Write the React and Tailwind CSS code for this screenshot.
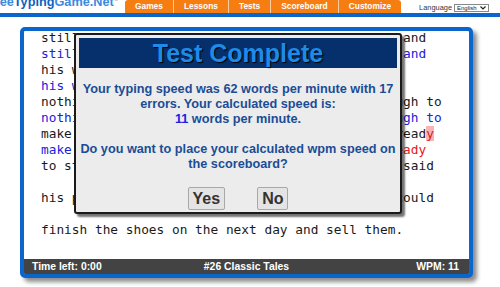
import React from "react";

const tabs = ["Games", "Lessons", "Tests", "Scoreboard", "Customize"];

const lines = [
  [{ t: "still had enough leather for one pair of shoes and" }],
  [{ t: "still had enough leather for one pair of shoes and", c: "typed" }],
  [{ t: "his wife. Now they were so poor that they had" }],
  [{ t: "his wife. Now they were so poor that they had", c: "typed" }],
  [{ t: "nothing left but a small piece of leather, enough to" }],
  [{ t: "nothing left but a small piece of leather, enough to", c: "typed" }],
  [{ t: "make one pair of shoes. In the evening he got read" }, { t: "y", c: "mark" }],
  [{ t: "make one pair of shoes. In the evening he got ", c: "typed" }, { t: "eady", c: "wrong" }],
  [{ t: "to start work early the next morning, and then said" }],
  [],
  [{ t: "his prayers, went to sleep, and hoped that he could" }],
  [],
  [{ t: "finish the shoes on the next day and sell them." }]
];

const segClass = {
  typed: "text-[#2020dd]",
  wrong: "text-[#e81818]",
  mark: "text-[#d81c1c] bg-[#f6b4b4]"
};

const Header = () => (
  <div className="flex h-[13px] items-start">
    <div className="w-[125px] shrink-0 overflow-hidden">
      <div className="ml-[-13px] mt-[-4px] whitespace-nowrap text-[12.7px] font-bold leading-[13px] text-[#3b8ae0]">
        Free<span className="text-[#0f5fc2]">Typing</span>Game.Net
        <span className="ml-[1px] text-[8px] align-top text-[#9ab]">˜</span>
      </div>
    </div>
    <div className="flex h-[13px]">
      {tabs.map((tab, i) => (
        <div
          key={tab}
          className={
            "flex h-[13px] items-center bg-[#f67d12] px-[10px] text-[8.4px] font-bold text-white " +
            (i === 0 ? "rounded-tl-[3px]" : "border-l border-[#fbcfa2]") +
            (i === tabs.length - 1 ? " rounded-tr-[3px]" : "")
          }>
          {tab}
        </div>
      ))}
    </div>
    <div className="ml-auto mr-[11px] mt-[4px] flex items-center gap-[2px]">
      <span className="text-[7.4px] leading-[8px] text-[#333]">Language</span>
      <div className="flex h-[8px] w-[35px] items-center justify-between border border-[#888] bg-white px-[2px] text-[6px] leading-[6px] text-[#222]">
        <span>English</span>
        <svg width="6" height="4" viewBox="0 0 6 4">
          <path d="M0.5 0.5 L3 3 L5.5 0.5" fill="none" stroke="#222" strokeWidth="1.2" />
        </svg>
      </div>
    </div>
  </div>
);

const Modal = () => (
  <div className="absolute left-[74px] top-[33px] h-[181px] w-[328px] rounded-[3px] border-2 border-[#1a1a1a] bg-[#ececec] p-[3px] shadow-[3px_3px_2px_rgba(0,0,0,0.55)]">
    <div className="flex h-[30px] items-center justify-center bg-[#06306b] text-[25px] font-bold leading-none text-[#1f8ae8] [text-shadow:1px_1px_1px_#000]">
      Test Complete
    </div>
    <div className="mt-[14px] text-center text-[12.7px] font-bold leading-[15px] text-[#1b4c96]">
      Your typing speed was 62 words per minute with 17
      <br />
      errors. Your calculated speed is:
      <br />
      <span className="text-[#1f1fe0]">11</span> words per minute.
      <br />
      <br />
      Do you want to place your calculated wpm speed on
      <br />
      the scoreboard?
    </div>
    <div className="mt-[15px] flex justify-center gap-[32px]">
      <button className="h-[23px] rounded-[2px] border border-[#a8a8a8] bg-[#e4e4e4] px-[4px] text-[16px] font-bold leading-none text-[#333]">
        Yes
      </button>
      <button className="h-[23px] rounded-[2px] border border-[#a8a8a8] bg-[#e4e4e4] px-[4px] text-[16px] font-bold leading-none text-[#333]">
        No
      </button>
    </div>
  </div>
);

export default function App() {
  return (
    <div className="relative h-[287px] w-[500px] overflow-hidden bg-white font-['Liberation_Sans',Arial,sans-serif]">
      <Header />
      <div className="h-[4px] bg-[#0a66cc]" />
      <div className="pl-[20px] pt-[10px]">
        <div className="flex h-[251px] w-[453px] flex-col overflow-hidden rounded-[5px] border-4 border-[#0a66cc] bg-white shadow-[4px_4px_4px_rgba(0,0,0,0.45)]">
          <div className="mt-[-1px] flex-1 pl-[17px] font-['DejaVu_Sans_Mono',monospace] text-[12.8px] leading-[16px] text-[#1a1a1a]">
            {lines.map((segs, i) => (
              <div key={i} className="h-[16px] whitespace-pre">
                {segs.map((s, j) => (
                  <span key={j} className={s.c ? segClass[s.c] : ""}>
                    {s.t}
                  </span>
                ))}
              </div>
            ))}
          </div>
          <div className="grid h-[15px] shrink-0 grid-cols-3 items-center bg-[#434343] px-[8px] text-[10.4px] font-bold text-white">
            <span>Time left: 0:00</span>
            <span className="text-center">#26 Classic Tales</span>
            <span className="pr-[2px] text-right">WPM: 11</span>
          </div>
        </div>
      </div>
      <Modal />
    </div>
  );
}
